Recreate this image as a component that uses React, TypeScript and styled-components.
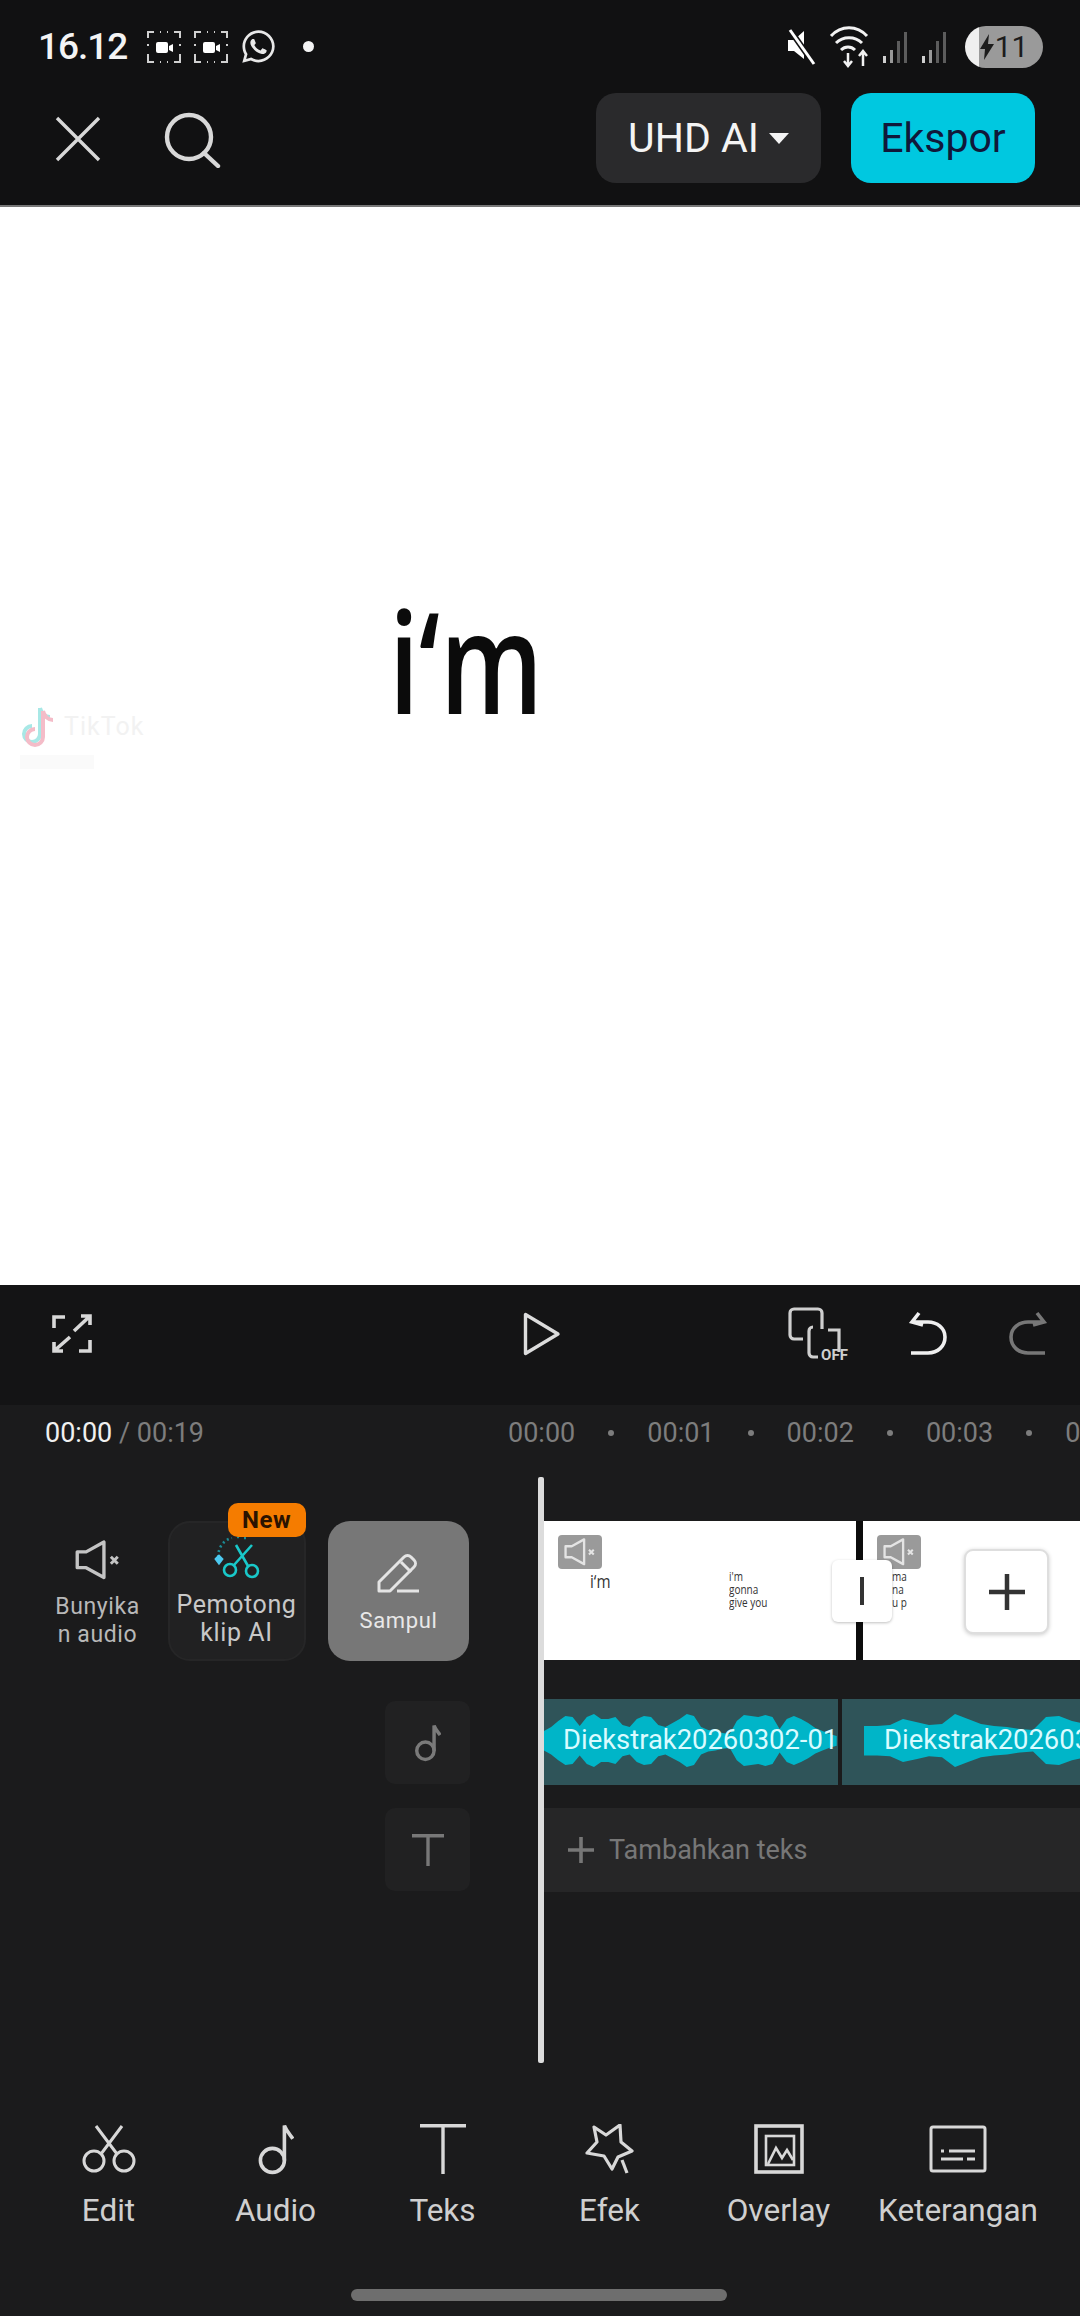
import React from 'react'
import styled, { createGlobalStyle } from 'styled-components'
import { FaWhatsapp } from 'react-icons/fa'

const GlobalStyle = createGlobalStyle`
  html, body {
    margin: 0;
    padding: 0;
    background: #1b1b1c;
  }
  * {
    box-sizing: border-box;
  }
`

const wave1 = [10, 14, 20, 25, 24, 15, 24, 27, 22, 22, 24, 16, 14, 22, 25, 24, 16, 14, 18, 22, 27, 25, 14, 11, 10, 8, 7, 20, 26, 25, 24, 26, 24, 12, 22, 25, 22, 18, 13, 10, 7, 5]
const wave2 = [15, 15, 16, 22, 19, 16, 17, 27, 22, 17, 15, 14, 12, 11, 24, 25, 20, 17]

const wavePath = (data: number[], step: number) => {
  const top = data.map((h, i) => `${i * step},${28 - h}`)
  const bottom = data.map((h, i) => `${i * step},${28 + h * 0.96}`).reverse()
  return top.concat(bottom).join(' ')
}

const CameraFrame = () => (
  <svg width="36" height="36" viewBox="0 0 36 36" fill="none" stroke="#d0d0d0" strokeWidth="2">
    <path d="M2 9V3h6M14 3h1M21 3h1M28 3h6v6M2 15v2M34 15v2M2 25v8h6M14 33h1M21 33h1M28 33h6v-8" />
    <rect x="10" y="13" width="12" height="11" rx="2" fill="#fff" stroke="none" />
    <path d="M23 17l4-2v8l-4-2z" fill="#fff" stroke="none" />
  </svg>
)

const MuteIcon = () => (
  <svg width="32" height="40" viewBox="0 0 32 40" fill="#fff">
    <path d="M2 13h6l10-9v28l-10-8H2z" />
    <path d="M4 3l24 34" stroke="#111112" strokeWidth="6" />
    <path d="M4 3l24 34" stroke="#fff" strokeWidth="3" />
  </svg>
)

const WifiIcon = () => (
  <svg width="42" height="46" viewBox="0 0 42 46" fill="none" stroke="#f2f2f2" strokeWidth="3">
    <path d="M2 12c10-11 26-11 36 0M7 19c7-7 19-7 26 0M12 26c4-4 10-4 14 0" />
    <path d="M19 29v13M15 37l4 5 4-5" strokeWidth="2.5" />
    <path d="M34 42V27M30 32l4-5 4 5" strokeWidth="2.5" />
  </svg>
)

const SignalIcon = () => (
  <svg width="28" height="32" viewBox="0 0 28 32" fill="#5c5c5c">
    <rect x="1" y="25" width="3" height="7" fill="#cfcfcf" />
    <rect x="8" y="19" width="3" height="13" fill="#999" />
    <rect x="15" y="10" width="3" height="22" />
    <rect x="22" y="1" width="3" height="31" />
  </svg>
)

const TikTokNote = () => (
  <svg width="36" height="42" viewBox="0 0 36 42" fill="none" strokeWidth="4">
    <path d="M20 3v26a8 8 0 1 1-8-8M20 3c1 5 5 9 10 9" stroke="#a8e8e6" />
    <path d="M23 6v26a8 8 0 1 1-8-8M23 6c1 5 5 9 10 9" stroke="#f4bcc8" />
  </svg>
)

const CloseIcon = () => (
  <svg width="46" height="46" viewBox="0 0 46 46" fill="none" stroke="#d8d8d8" strokeWidth="3.4">
    <path d="M2 2l42 42M44 2L2 44" />
  </svg>
)

const SearchIcon = () => (
  <svg width="58" height="56" viewBox="0 0 58 56" fill="none" stroke="#d8d8d8" strokeWidth="4.4">
    <circle cx="26" cy="25" r="22" />
    <path d="M41 41l14 13" strokeLinecap="round" />
  </svg>
)

const ExpandIcon = () => (
  <svg width="44" height="42" viewBox="0 0 44 42" fill="none" stroke="#d8d8d8" strokeWidth="3.6">
    <path d="M4 15V4h11M40 27v11H29M24 18L40 3M31 3h9v9M20 24L4 38M4 29v9h9" />
  </svg>
)

const PlayIcon = () => (
  <svg width="38" height="44" viewBox="0 0 38 44" fill="none" stroke="#dcdcdc" strokeWidth="3.4">
    <path d="M2.5 2.5v39L35 22z" strokeLinejoin="round" />
  </svg>
)

const KeyframeOffIcon = () => (
  <svg width="62" height="54" viewBox="0 0 62 54" fill="none" stroke="#cfcfcf" strokeWidth="3.2">
    <path d="M16 32H7a4 4 0 0 1-4-4V6a4 4 0 0 1 4-4h24a4 4 0 0 1 4 4v16" />
    <path d="M26 20a4 4 0 0 0-4 4v22a4 4 0 0 0 4 4h5M41 23h11v22" />
    <text x="34" y="53" fontFamily="Roboto, sans-serif" fontSize="15" fontWeight="700" fill="#cfcfcf" stroke="none" textLength="27">OFF</text>
  </svg>
)

const UndoIcon = ({ dim }: { dim?: boolean }) => (
  <svg width="40" height="44" viewBox="0 0 40 44" fill="none" stroke={dim ? '#777' : '#efefef'} strokeWidth="3.6" style={dim ? { transform: 'scaleX(-1)' } : undefined}>
    <path d="M11 2L4 11l11 3M4 11h16c9 0 17 6 17 15s-7 16-17 16H3" />
  </svg>
)

const SpeakerMuted = ({ size = 46, color = '#c4c4c4' }: { size?: number; color?: string }) => (
  <svg width={size} height={size * 0.86} viewBox="0 0 46 40" fill="none" stroke={color} strokeWidth="3.4">
    <path d="M2 12h9L29 2v36L11 28H2z" strokeLinejoin="round" />
    <path d="M36 17l7 7M43 17l-7 7" strokeWidth="3" />
  </svg>
)

const AiCutIcon = () => (
  <svg width="48" height="44" viewBox="0 0 48 44" fill="none" stroke="#19c8c9" strokeWidth="2.6">
    <path d="M6 25C3 14 9 3 19 1M24 0h2M31 1h2" strokeDasharray="2 3" stroke="#1b8c96" />
    <path d="M3 22l3-3 3 3-3 4z" fill="#4cc9f0" stroke="#4cc9f0" />
    <circle cx="17" cy="33" r="6" />
    <circle cx="39" cy="34" r="6" />
    <path d="M21 28L39 8M35 29L23 8" />
  </svg>
)

const PencilIcon = () => (
  <svg width="44" height="40" viewBox="0 0 44 40" fill="none" stroke="#e4e4e4" strokeWidth="3">
    <path d="M2 38v-9L27 4c2-2 5-2 7 0l3 3c2 2 2 5 0 7L13 38z" strokeLinejoin="round" />
    <path d="M24 9l10 10M20 38h22" />
  </svg>
)

const NoteIcon = ({ size = 30, color = '#7a7a7a', sw = 4 }: { size?: number; color?: string; sw?: number }) => (
  <svg width={size} height={size * 1.5} viewBox="0 0 30 45" fill="none" stroke={color} strokeWidth={sw}>
    <circle cx="12" cy="32" r="10" />
    <path d="M22 32V3c2 5 5 8 7 11" />
  </svg>
)

const TeksIcon = ({ w, h, color, sw }: { w: number; h: number; color: string; sw: number }) => (
  <svg width={w} height={h} viewBox={`0 0 ${w} ${h}`} fill="none" stroke={color} strokeWidth={sw}>
    <path d={`M0 ${sw / 2}H${w}M${w / 2} 0V${h}`} />
  </svg>
)

const ScissorsIcon = () => (
  <svg width="54" height="48" viewBox="0 0 54 48" fill="none" stroke="#d8d8d8" strokeWidth="3">
    <circle cx="12" cy="36" r="10" />
    <circle cx="42" cy="36" r="10" />
    <path d="M14 1l21 28M40 1L19 29" />
  </svg>
)

const StarIcon = () => (
  <svg width="50" height="50" viewBox="0 0 50 50" fill="none" stroke="#d8d8d8" strokeWidth="3.2">
    <path d="M9 3l12 8 14-10 1 17 11 9-14 6-6 12-8-13-17-3 10-11z" strokeLinejoin="round" />
    <path d="M37 36l5 13" />
  </svg>
)

const OverlayIcon = () => (
  <svg width="50" height="50" viewBox="0 0 50 50" fill="none" stroke="#d8d8d8" strokeWidth="3.6">
    <rect x="2" y="2" width="46" height="46" />
    <rect x="12" y="12" width="28" height="29" strokeWidth="2.6" />
    <path d="M14 40l8-16 6 10 5-8 6 10" strokeWidth="2.6" />
  </svg>
)

const CaptionIcon = () => (
  <svg width="58" height="48" viewBox="0 0 58 48" fill="none" stroke="#d8d8d8" strokeWidth="3">
    <rect x="2" y="2" width="54" height="44" rx="2" />
    <path d="M12 26h3M20 26h26M12 34h22M38 34h8" />
  </svg>
)

const Screen = styled.div`
  width: 1080px;
  height: 2316px;
  display: flex;
  flex-direction: column;
  overflow: hidden;
  background: #1b1b1c;
  font-family: Roboto, "Liberation Sans", sans-serif;
`

const Header = styled.header`
  height: 207px;
  flex: none;
  background: #111112;
  border-bottom: 2px solid #777;
`

const StatusBar = styled.div`
  height: 93px;
  padding: 0 37px 0 38px;
  display: flex;
  align-items: center;
  justify-content: space-between;
`

const StatusGroup = styled.div`
  display: flex;
  align-items: center;
  gap: 11px;
`

const Clock = styled.span`
  font-size: 37px;
  font-weight: 500;
  letter-spacing: -1px;
  color: #f4f4f4;
  margin-right: 8px;
`

const WhatsApp = styled(FaWhatsapp)`
  font-size: 37px;
  color: #e8e8e8;
`

const NoticeDot = styled.span`
  width: 11px;
  height: 11px;
  margin-left: 15px;
  border-radius: 50%;
  background: #f4f4f4;
`

const Battery = styled.div`
  width: 78px;
  height: 42px;
  margin-left: 5px;
  border-radius: 21px;
  display: flex;
  align-items: center;
  justify-content: center;
  gap: 1px;
  font-size: 30px;
  color: #1c1c1c;
  background: linear-gradient(90deg, #efefef 0 18%, #9a9a9a 18%);
`

const TopBar = styled.div`
  height: 112px;
  padding: 0 45px 0 55px;
  display: flex;
  align-items: flex-start;
`

const IconSlot = styled.div<{ $gap?: number; $top?: number }>`
  display: flex;
  margin-left: ${p => p.$gap ?? 0}px;
  margin-top: ${p => p.$top ?? 0}px;
`

const QualityButton = styled.div`
  width: 225px;
  height: 90px;
  margin-left: auto;
  border-radius: 20px;
  background: #2a2a2c;
  color: #f4f4f4;
  font-size: 41px;
  display: flex;
  align-items: center;
  justify-content: center;
  gap: 10px;
`

const Caret = styled.span`
  width: 0;
  height: 0;
  border-left: 10px solid transparent;
  border-right: 10px solid transparent;
  border-top: 11px solid #f4f4f4;
`

const ExportButton = styled.div`
  width: 184px;
  height: 90px;
  margin-left: 30px;
  border-radius: 20px;
  background: #00c8e0;
  color: #10183a;
  font-size: 41px;
  display: flex;
  align-items: center;
  justify-content: center;
`

const Preview = styled.main`
  height: 1078px;
  flex: none;
  position: relative;
  padding: 382px 0 0 389px;
  background: #fff;
`

const VideoText = styled.div`
  width: 160px;
  font-family: "Open Sans", sans-serif;
  font-size: 142px;
  line-height: 140px;
  font-weight: 600;
  color: #0b0b0b;
  white-space: nowrap;
  transform: scaleX(0.76);
  transform-origin: left center;
`

const Watermark = styled.div`
  position: absolute;
  left: 20px;
  top: 498px;
  display: flex;
  flex-direction: column;
  gap: 8px;
`

const WatermarkBrand = styled.div`
  display: flex;
  align-items: center;
  gap: 8px;
  font-size: 25px;
  letter-spacing: 1px;
  color: #f2f2f2;
`

const WatermarkHandle = styled.div`
  width: 74px;
  height: 14px;
  background: #fafafa;
`

const Toolbar = styled.div`
  height: 120px;
  flex: none;
  background: #141415;
  display: grid;
  grid-template-columns: 473px 264px 121px 100px 1fr;
  padding: 22px 0 0 50px;
  align-items: start;
`

const Timeline = styled.section`
  height: 658px;
  flex: none;
  position: relative;
  background: #1b1b1c;
`

const TimeRow = styled.div`
  height: 72px;
  display: grid;
  grid-template-columns: 508px 1fr;
  padding-top: 12px;
  align-items: start;
  font-size: 27px;
  line-height: 32px;
  color: #7d7d7d;
`

const Counter = styled.div`
  padding-left: 45px;
  & > b {
    font-weight: 400;
    color: #f0f0f0;
  }
`

const Ruler = styled.div`
  display: flex;
  overflow: hidden;
  white-space: nowrap;
`

const Tick = styled.div`
  flex: none;
  width: 139.3px;
  display: flex;
  align-items: center;
`

const TickDot = styled.span`
  width: 6px;
  height: 6px;
  margin-left: 33px;
  border-radius: 50%;
  background: #7d7d7d;
`

const Tracks = styled.div`
  display: grid;
  grid-template-columns: 544px 1fr;
`

const SideColumn = styled.div`
  padding-top: 44px;
  display: flex;
  flex-direction: column;
`

const ToolRow = styled.div`
  display: flex;
  padding-left: 50px;
  gap: 22.5px;
`

const Tool = styled.div<{ $width: number; $active?: boolean; $card?: boolean; $top: number }>`
  position: relative;
  width: ${p => p.$width}px;
  height: 140px;
  padding-top: ${p => p.$top}px;
  border-radius: 22px;
  display: flex;
  flex-direction: column;
  align-items: center;
  text-align: center;
  white-space: pre-line;
  background: ${p => (p.$active ? '#777777' : p.$card ? '#212122' : 'transparent')};
  border: ${p => (p.$card ? '2px solid #262627' : 'none')};
`

const ToolLabel = styled.div<{ $size: number; $color: string; $mt: number }>`
  margin-top: ${p => p.$mt}px;
  font-size: ${p => p.$size}px;
  line-height: 28px;
  letter-spacing: 0.6px;
  color: ${p => p.$color};
`

const NewBadge = styled.span`
  position: absolute;
  top: -20px;
  right: -2px;
  width: 78px;
  height: 34px;
  border-radius: 10px;
  background: #f57c00;
  color: #2b1300;
  font-size: 24px;
  font-weight: 700;
  letter-spacing: 0.5px;
  line-height: 34px;
`

const MiniColumn = styled.div`
  margin-top: 40px;
  padding-right: 74px;
  display: flex;
  flex-direction: column;
  align-items: flex-end;
  gap: 24px;
`

const MiniButton = styled.div`
  width: 85px;
  height: 83px;
  border-radius: 10px;
  background: #212122;
  display: flex;
  align-items: center;
  justify-content: center;
`

const TrackColumn = styled.div`
  padding-top: 44px;
  overflow: hidden;
`

const VideoRow = styled.div`
  position: relative;
  height: 139px;
  display: flex;
`

const Frame = styled.div<{ $width: number; $left: number; $top: number }>`
  position: relative;
  flex: none;
  width: ${p => p.$width}px;
  height: 100%;
  padding: ${p => p.$top}px 0 0 ${p => p.$left}px;
  background: #fff;
`

const FrameGap = styled.div`
  flex: none;
  width: 7px;
  background: #0c0c0c;
`

const MuteTag = styled.div`
  position: absolute;
  left: 14px;
  top: 14px;
  width: 44px;
  height: 34px;
  border-radius: 4px;
  background: #9a9a9a;
  display: flex;
  align-items: center;
  justify-content: center;
`

const ThumbText = styled.div<{ $size: number }>`
  font-family: "Open Sans", sans-serif;
  font-size: ${p => p.$size}px;
  line-height: 13px;
  color: #333;
  white-space: pre-line;
  transform: scaleX(0.8);
  transform-origin: left top;
`

const TransitionHandle = styled.div`
  position: absolute;
  left: 288px;
  top: 39px;
  width: 60px;
  height: 62px;
  border-radius: 6px;
  background: #fff;
  box-shadow: 0 1px 3px rgba(0, 0, 0, 0.25);
  display: flex;
  align-items: center;
  justify-content: center;
  &::after {
    content: '';
    width: 4px;
    height: 28px;
    background: #333;
  }
`

const AddClip = styled.div`
  position: absolute;
  left: 420px;
  top: 28px;
  width: 85px;
  height: 85px;
  border-radius: 9px;
  border: 2px solid #dedede;
  background: #fff;
  box-shadow: 0 1px 4px rgba(0, 0, 0, 0.2);
  display: flex;
  align-items: center;
  justify-content: center;
`

const AudioRow = styled.div`
  height: 86px;
  margin-top: 39px;
  display: flex;
  gap: 4px;
`

const AudioClip = styled.div<{ $width: number; $left: number }>`
  position: relative;
  flex: none;
  width: ${p => p.$width}px;
  padding-left: ${p => p.$left}px;
  background: #2f5459;
  color: #d9fbff;
  font-size: 27.4px;
  line-height: 82px;
  white-space: nowrap;
  overflow: hidden;
  & > span {
    position: relative;
  }
`

const WaveForm = styled.svg<{ $left: number }>`
  position: absolute;
  left: ${p => p.$left}px;
  top: 14px;
`

const AddTextRow = styled.div`
  height: 84px;
  margin-top: 23px;
  padding-left: 24px;
  display: flex;
  align-items: center;
  gap: 15px;
  background: #262627;
  color: #777;
  font-size: 27px;
`

const Playhead = styled.div`
  position: absolute;
  left: 538px;
  top: 72px;
  width: 6px;
  height: 586px;
  border-radius: 2px;
  background: #dcdcdc;
`

const BottomNav = styled.nav`
  height: 253px;
  flex: none;
  padding: 0 28px 0 25px;
  display: grid;
  grid-template-columns: 167px 167px 167px 167px 171px 1fr;
  grid-template-rows: 226px 1fr;
  background: #1b1b1c;
`

const NavItem = styled.div`
  display: flex;
  flex-direction: column;
  align-items: center;
  padding-top: 58px;
`

const NavIcon = styled.div`
  height: 56px;
  display: flex;
  align-items: center;
`

const NavLabel = styled.div`
  margin-top: 17px;
  font-size: 31.5px;
  line-height: 34px;
  color: #cfcfcf;
  white-space: nowrap;
`

const HomeBar = styled.div`
  grid-column: 1 / -1;
  justify-self: start;
  width: 376px;
  height: 12px;
  margin-left: 326px;
  border-radius: 6px;
  background: #6e6e6e;
`

const ticks = ['00:00', '00:01', '00:02', '00:03', '00:04']

const navItems = [
  { label: 'Edit', icon: <ScissorsIcon /> },
  { label: 'Audio', icon: <NoteIcon size={36} color="#d8d8d8" sw={3} /> },
  { label: 'Teks', icon: <TeksIcon w={46} h={50} color="#d8d8d8" sw={3.4} /> },
  { label: 'Efek', icon: <StarIcon /> },
  { label: 'Overlay', icon: <OverlayIcon /> },
  { label: 'Keterangan', icon: <CaptionIcon /> },
]

const App = () => {
  return (
    <Screen>
      <GlobalStyle />
      <Header>
        <StatusBar>
          <StatusGroup>
            <Clock>16.12</Clock>
            <CameraFrame />
            <CameraFrame />
            <WhatsApp />
            <NoticeDot />
          </StatusGroup>
          <StatusGroup>
            <MuteIcon />
            <WifiIcon />
            <SignalIcon />
            <SignalIcon />
            <Battery>
              <svg width="14" height="26" viewBox="0 0 14 26" fill="#1c1c1c">
                <path d="M9 0L0 15h5l-1 11 10-16H8z" />
              </svg>
              11
            </Battery>
          </StatusGroup>
        </StatusBar>
        <TopBar>
          <IconSlot $top={23}>
            <CloseIcon />
          </IconSlot>
          <IconSlot $gap={62} $top={19}>
            <SearchIcon />
          </IconSlot>
          <QualityButton>
            UHD AI
            <Caret />
          </QualityButton>
          <ExportButton>Ekspor</ExportButton>
        </TopBar>
      </Header>

      <Preview>
        <VideoText>i‘m</VideoText>
        <Watermark>
          <WatermarkBrand>
            <TikTokNote />
            TikTok
          </WatermarkBrand>
          <WatermarkHandle />
        </Watermark>
      </Preview>

      <Toolbar>
        <IconSlot $top={6}>
          <ExpandIcon />
        </IconSlot>
        <IconSlot $top={5}>
          <PlayIcon />
        </IconSlot>
        <KeyframeOffIcon />
        <IconSlot $top={4}>
          <UndoIcon />
        </IconSlot>
        <IconSlot $top={4}>
          <UndoIcon dim />
        </IconSlot>
      </Toolbar>

      <Timeline>
        <TimeRow>
          <Counter>
            <b>00:00</b> / 00:19
          </Counter>
          <Ruler>
            {ticks.map(t => (
              <Tick key={t}>
                {t}
                <TickDot />
              </Tick>
            ))}
          </Ruler>
        </TimeRow>

        <Tracks>
          <SideColumn>
            <ToolRow>
              <Tool $width={95} $top={19}>
                <SpeakerMuted />
                <ToolLabel $size={23} $color="#b8b8b8" $mt={13}>{'Bunyika\nn audio'}</ToolLabel>
              </Tool>
              <Tool $width={138} $top={14} $card>
                <NewBadge>New</NewBadge>
                <AiCutIcon />
                <ToolLabel $size={25} $color="#c8c8c8" $mt={10}>{'Pemotong\nklip AI'}</ToolLabel>
              </Tool>
              <Tool $width={141} $top={32} $active>
                <PencilIcon />
                <ToolLabel $size={22} $color="#e8e8e8" $mt={14}>Sampul</ToolLabel>
              </Tool>
            </ToolRow>
            <MiniColumn>
              <MiniButton>
                <NoteIcon size={26} />
              </MiniButton>
              <MiniButton>
                <TeksIcon w={32} h={32} color="#787878" sw={3.4} />
              </MiniButton>
            </MiniColumn>
          </SideColumn>

          <TrackColumn>
            <VideoRow>
              <Frame $width={156} $left={46} $top={54}>
                <MuteTag>
                  <SpeakerMuted size={32} color="#e4e4e4" />
                </MuteTag>
                <ThumbText $size={19}>i‘m</ThumbText>
              </Frame>
              <Frame $width={156} $left={29} $top={49}>
                <ThumbText $size={12.5}>{"i'm\ngonna\ngive you"}</ThumbText>
              </Frame>
              <FrameGap />
              <Frame $width={217} $left={29} $top={49}>
                <MuteTag>
                  <SpeakerMuted size={32} color="#e4e4e4" />
                </MuteTag>
                <ThumbText $size={12.5}>{'ma\nna\nu p'}</ThumbText>
              </Frame>
              <TransitionHandle />
              <AddClip>
                <svg width="36" height="36" viewBox="0 0 36 36" stroke="#333" strokeWidth="4.5">
                  <path d="M0 18h36M18 0v36" />
                </svg>
              </AddClip>
            </VideoRow>

            <AudioRow>
              <AudioClip $width={294} $left={19}>
                <WaveForm $left={0} width="294" height="56" fill="#00b5c8">
                  <polygon points={wavePath(wave1, 7.14)} />
                </WaveForm>
                <span>Diekstrak20260302-01</span>
              </AudioClip>
              <AudioClip $width={238} $left={42}>
                <WaveForm $left={22} width="216" height="56" fill="#00b5c8">
                  <polygon points={wavePath(wave2, 13)} />
                </WaveForm>
                <span>Diekstrak20260302-01</span>
              </AudioClip>
            </AudioRow>

            <AddTextRow>
              <svg width="26" height="26" viewBox="0 0 26 26" stroke="#777" strokeWidth="3.6">
                <path d="M0 13h26M13 0v26" />
              </svg>
              Tambahkan teks
            </AddTextRow>
          </TrackColumn>
        </Tracks>

        <Playhead />
      </Timeline>

      <BottomNav>
        {navItems.map(item => (
          <NavItem key={item.label}>
            <NavIcon>{item.icon}</NavIcon>
            <NavLabel>{item.label}</NavLabel>
          </NavItem>
        ))}
        <HomeBar />
      </BottomNav>
    </Screen>
  )
}

export default App
